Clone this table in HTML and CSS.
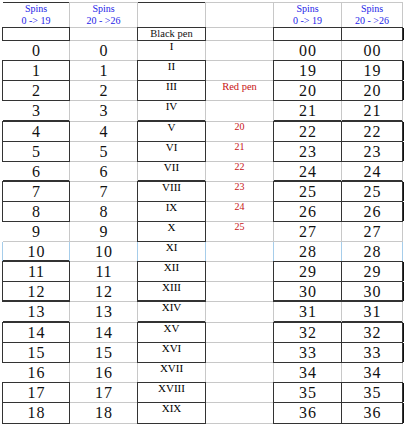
FILE: index.html
```html
<!DOCTYPE html>
<html>
<head>
<meta charset="utf-8">
<link rel="stylesheet" href="styles.css">
</head>
<body>
<div class="sheet">
  <div class="c hd dt">Spins<br>0 -&gt; 19</div>
  <div class="c hd">Spins<br>20 - &gt;26</div>
  <div class="c dt"></div>
  <div class="c"></div>
  <div class="c hd">Spins<br>0 -&gt; 19</div>
  <div class="c hd">Spins<br>20 - &gt;26</div>

  <div class="c bx"></div>
  <div class="c"></div>
  <div class="c bx pen">Black pen</div>
  <div class="c"></div>
  <div class="c bx"></div>
  <div class="c bxr"></div>

  <div class="c n">0</div><div class="c n">0</div><div class="c r">I</div><div class="c"></div><div class="c n">00</div><div class="c n">00</div>
  <div class="c n bx">1</div><div class="c n">1</div><div class="c r bx">II</div><div class="c"></div><div class="c n bx">19</div><div class="c n bxr">19</div>
  <div class="c n bx">2</div><div class="c n">2</div><div class="c r bx">III</div><div class="c pen rd">Red pen</div><div class="c n bx">20</div><div class="c n bxr">20</div>
  <div class="c n">3</div><div class="c n">3</div><div class="c r">IV</div><div class="c"></div><div class="c n">21</div><div class="c n">21</div>
  <div class="c n bx tt">4</div><div class="c n">4</div><div class="c r bx tt">V</div><div class="c rn">20</div><div class="c n bx tt">22</div><div class="c n bxr tt">22</div>
  <div class="c n bx">5</div><div class="c n">5</div><div class="c r bx">VI</div><div class="c rn">21</div><div class="c n bx">23</div><div class="c n bxr">23</div>
  <div class="c n">6</div><div class="c n">6</div><div class="c r">VII</div><div class="c rn">22</div><div class="c n">24</div><div class="c n">24</div>
  <div class="c n bx tt">7</div><div class="c n">7</div><div class="c r bx tt">VIII</div><div class="c rn">23</div><div class="c n bx tt">25</div><div class="c n bxr tt">25</div>
  <div class="c n bx">8</div><div class="c n">8</div><div class="c r bx">IX</div><div class="c rn">24</div><div class="c n bx">26</div><div class="c n bxr">26</div>
  <div class="c n">9</div><div class="c n">9</div><div class="c r bx">X</div><div class="c rn">25</div><div class="c n">27</div><div class="c n">27</div>
  <div class="c n bs">10</div><div class="c n">10</div><div class="c r bs">XI</div><div class="c"></div><div class="c n bs">28</div><div class="c n bs">28</div>
  <div class="c n bx tt">11</div><div class="c n">11</div><div class="c r bx">XII</div><div class="c"></div><div class="c n bx">29</div><div class="c n bxr">29</div>
  <div class="c n bx">12</div><div class="c n">12</div><div class="c r bx">XIII</div><div class="c"></div><div class="c n bx">30</div><div class="c n bxr">30</div>
  <div class="c n tt">13</div><div class="c n">13</div><div class="c r tt">XIV</div><div class="c"></div><div class="c n tt">31</div><div class="c n tt">31</div>
  <div class="c n bx tt">14</div><div class="c n">14</div><div class="c r bx tt">XV</div><div class="c"></div><div class="c n bx tt">32</div><div class="c n bxr tt">32</div>
  <div class="c n bx">15</div><div class="c n">15</div><div class="c r bx">XVI</div><div class="c"></div><div class="c n bx">33</div><div class="c n bxr">33</div>
  <div class="c n">16</div><div class="c n">16</div><div class="c r">XVII</div><div class="c"></div><div class="c n">34</div><div class="c n">34</div>
  <div class="c n bx">17</div><div class="c n">17</div><div class="c r bx">XVIII</div><div class="c"></div><div class="c n bx">35</div><div class="c n bxr">35</div>
  <div class="c n bx tb">18</div><div class="c n">18</div><div class="c r bx tb">XIX</div><div class="c"></div><div class="c n bx tb">36</div><div class="c n bxr tb">36</div>
</div>
</body>
</html>
```
FILE: styles.css
```css
* { box-sizing: border-box; }
body { margin: 0; background: #fff; }
.sheet {
  margin: 2px 0 0 3px;
  display: grid;
  grid-template-columns: 66px 67px 67px 67px 67px 60px;
  grid-template-rows: 24px 12px 19px 19px 19px 20px repeat(9, 19px) 20px 19px 19px 19px 19px 20px;
  gap: 1px;
  width: max-content;
  background: #c8c8c8;
  border-top: 1px solid #c8c8c8;
  border-right: 1px solid #c8c8c8;
  border-bottom: 1px solid #c8c8c8;
  font-family: "Liberation Serif", "Times New Roman", serif;
}
.c { background: #fff; text-align: center; white-space: nowrap; }
.hd { color: #2424e8; font-size: 10px; line-height: 12px; }
.n {
  font-size: 16px;
  letter-spacing: 0.8px;
  text-indent: 0.8px;
  line-height: 18px;
  padding-top: 1px;
  color: #111;
}
.r { font-size: 11px; line-height: 10px; color: #000; }
.pen { font-size: 10.5px; line-height: 12px; color: #111; }
.rd { color: #c81414; }
.rn { color: #c81414; font-size: 10px; line-height: 10px; }

.dt { box-shadow: 0 -1px 0 0 #333; }
.tt { box-shadow: 0 -2px 0 0 #333; }
.bx { box-shadow: 0 0 0 1px #333; }
.bx.tt { box-shadow: 0 0 0 1px #333, 0 -2px 0 0 #333; }
.bx.tb { box-shadow: 0 0 0 1px #333, 0 2px 0 0 #333; }
.bxr { box-shadow: 0 0 0 1px #333, 2px 0 0 0 #111; }
.bxr.tt { box-shadow: 0 0 0 1px #333, 2px 0 0 0 #111, 0 -2px 0 0 #333; }
.bxr.tb { box-shadow: 0 0 0 1px #333, 2px 0 0 0 #111, 0 2px 0 0 #333; }
.bs { box-shadow: -1px 0 0 0 #a6cdea, 1px 0 0 0 #a6cdea; }
```
